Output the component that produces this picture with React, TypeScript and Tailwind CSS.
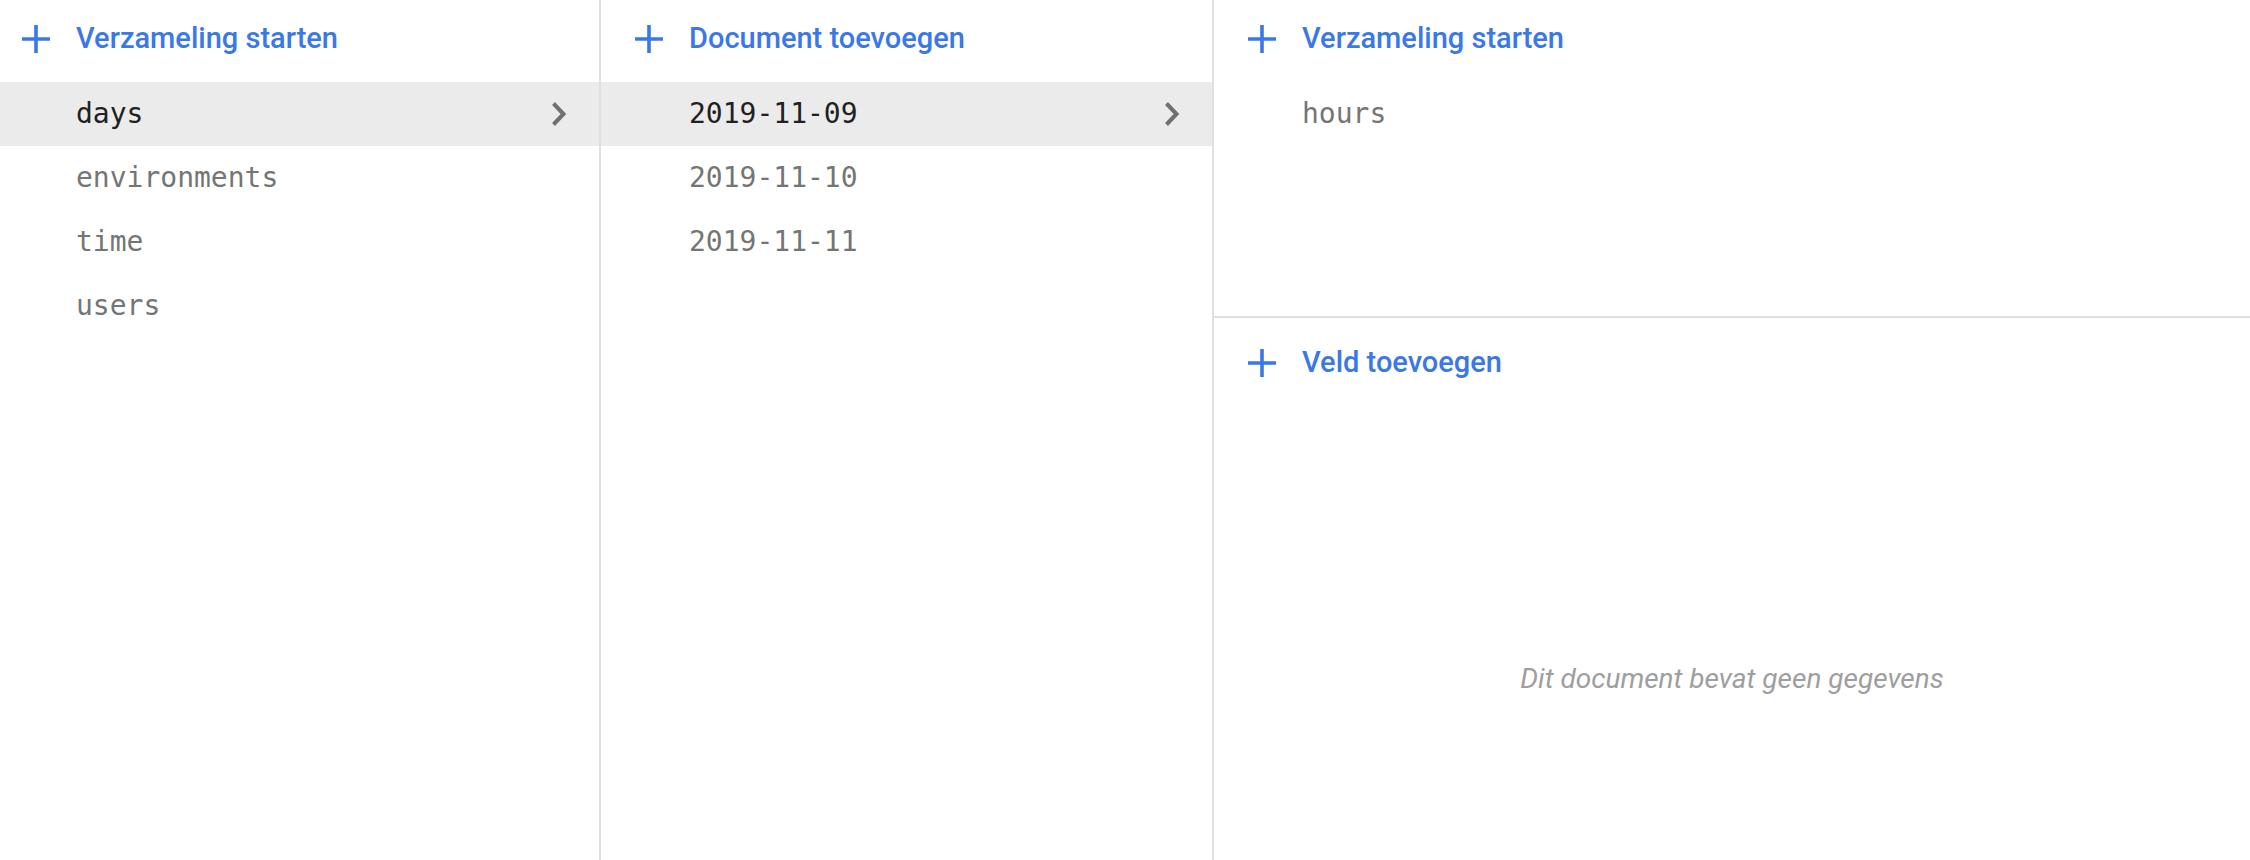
import React from 'react';

const mono = { fontFamily: '"DejaVu Sans Mono", "Liberation Mono", monospace' };

function PlusIcon() {
  return (
    <svg width="28" height="28" viewBox="0 0 28 28" className="shrink-0">
      <path d="M14 0v28M0 14h28" stroke="#3b78e7" strokeWidth="3.6" fill="none" />
    </svg>
  );
}

function Chevron() {
  return (
    <svg width="16" height="24" viewBox="0 0 16 24" className="shrink-0">
      <path d="M2.5 1.5l10 10.5-10 10.5" stroke="#707070" strokeWidth="4" fill="none" />
    </svg>
  );
}

function AddHeader({ label, indent }: { label: string; indent: 'first' | 'rest' }) {
  return (
    <div
      className={
        indent === 'first'
          ? 'h-[78px] flex items-center gap-[26px] pl-[22px]'
          : 'h-[78px] flex items-center gap-[26px] pl-[34px]'
      }
    >
      <PlusIcon />
      <span className="text-[29px] font-medium text-[#3b78e7]">{label}</span>
    </div>
  );
}

function Row({ label, selected, indent }: { label: string; selected?: boolean; indent: 'first' | 'rest' }) {
  return (
    <div
      className={
        (selected ? 'bg-[#ebebeb] text-[#212121] ' : 'text-[#757575] ') +
        (indent === 'first' ? 'pl-[76px] ' : 'pl-[88px] ') +
        'h-[64px] flex items-center justify-between pr-[32px]'
      }
    >
      <span className="text-[28px]" style={mono}>
        {label}
      </span>
      {selected && <Chevron />}
    </div>
  );
}

export default function App() {
  return (
    <div
      className="flex h-[860px] w-[2250px] bg-white overflow-hidden"
      style={{ fontFamily: 'Roboto, "Liberation Sans", sans-serif' }}
    >
      {/* Collections */}
      <div className="w-[601px] shrink-0 border-r-2 border-[#e0e0e0]">
        <AddHeader label="Verzameling starten" indent="first" />
        <div className="pt-[4px]">
          <Row label="days" selected indent="first" />
          <Row label="environments" indent="first" />
          <Row label="time" indent="first" />
          <Row label="users" indent="first" />
        </div>
      </div>

      {/* Documents */}
      <div className="w-[613px] shrink-0 border-r-2 border-[#e0e0e0]">
        <AddHeader label="Document toevoegen" indent="rest" />
        <div className="pt-[4px]">
          <Row label="2019-11-09" selected indent="rest" />
          <Row label="2019-11-10" indent="rest" />
          <Row label="2019-11-11" indent="rest" />
        </div>
      </div>

      {/* Document detail */}
      <div className="flex-1 flex flex-col">
        <div className="h-[318px] shrink-0 border-b-2 border-[#e0e0e0]">
          <AddHeader label="Verzameling starten" indent="rest" />
          <div className="pt-[4px]">
            <Row label="hours" indent="rest" />
          </div>
        </div>
        <div className="h-[90px] flex items-center gap-[26px] pl-[34px]">
          <PlusIcon />
          <span className="text-[29px] font-medium text-[#3b78e7]">Veld toevoegen</span>
        </div>
        <div className="flex justify-center pt-[250px]">
          <span className="text-[28px] italic text-[#9e9e9e]">Dit document bevat geen gegevens</span>
        </div>
      </div>
    </div>
  );
}
